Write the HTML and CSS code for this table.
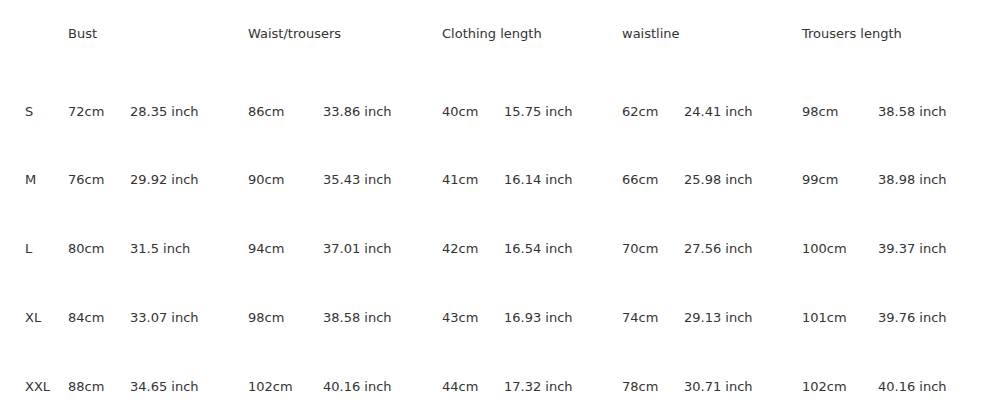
FILE: index.html
```html
<!DOCTYPE html>
<html>
<head>
<meta charset="utf-8">
<link rel="stylesheet" href="styles.css">
</head>
<body>
<div class="table">
  <div class="row head">
    <div class="cell"></div>
    <div class="cell span2">Bust</div>
    <div class="cell span2">Waist/trousers</div>
    <div class="cell span2">Clothing length</div>
    <div class="cell span2">waistline</div>
    <div class="cell span2">Trousers length</div>
  </div>
  <div class="body">
    <div class="row">
      <div class="cell">S</div>
      <div class="cell">72cm</div><div class="cell">28.35 inch</div>
      <div class="cell">86cm</div><div class="cell">33.86 inch</div>
      <div class="cell">40cm</div><div class="cell">15.75 inch</div>
      <div class="cell">62cm</div><div class="cell">24.41 inch</div>
      <div class="cell">98cm</div><div class="cell">38.58 inch</div>
    </div>
    <div class="row">
      <div class="cell">M</div>
      <div class="cell">76cm</div><div class="cell">29.92 inch</div>
      <div class="cell">90cm</div><div class="cell">35.43 inch</div>
      <div class="cell">41cm</div><div class="cell">16.14 inch</div>
      <div class="cell">66cm</div><div class="cell">25.98 inch</div>
      <div class="cell">99cm</div><div class="cell">38.98 inch</div>
    </div>
    <div class="row">
      <div class="cell">L</div>
      <div class="cell">80cm</div><div class="cell">31.5 inch</div>
      <div class="cell">94cm</div><div class="cell">37.01 inch</div>
      <div class="cell">42cm</div><div class="cell">16.54 inch</div>
      <div class="cell">70cm</div><div class="cell">27.56 inch</div>
      <div class="cell">100cm</div><div class="cell">39.37 inch</div>
    </div>
    <div class="row">
      <div class="cell">XL</div>
      <div class="cell">84cm</div><div class="cell">33.07 inch</div>
      <div class="cell">98cm</div><div class="cell">38.58 inch</div>
      <div class="cell">43cm</div><div class="cell">16.93 inch</div>
      <div class="cell">74cm</div><div class="cell">29.13 inch</div>
      <div class="cell">101cm</div><div class="cell">39.76 inch</div>
    </div>
    <div class="row">
      <div class="cell">XXL</div>
      <div class="cell">88cm</div><div class="cell">34.65 inch</div>
      <div class="cell">102cm</div><div class="cell">40.16 inch</div>
      <div class="cell">44cm</div><div class="cell">17.32 inch</div>
      <div class="cell">78cm</div><div class="cell">30.71 inch</div>
      <div class="cell">102cm</div><div class="cell">40.16 inch</div>
    </div>
  </div>
</div>
</body>
</html>
```
FILE: styles.css
```css
html, body {
  margin: 0;
  padding: 0;
  background: #ffffff;
}
body {
  font-family: "DejaVu Sans", Verdana, sans-serif;
  font-size: 13px;
  line-height: 20px;
  color: #333333;
}
.table {
  display: flex;
  flex-direction: column;
  padding: 23.5px 0 0 25px;
}
.row {
  display: grid;
  grid-template-columns: 43px 62px 118px 75px 119px 62px 118px 62px 118px 76px 1fr;
  height: 20px;
}
.head {
  margin-bottom: 58px;
}
.body {
  display: flex;
  flex-direction: column;
  gap: 48.75px;
}
.cell {
  white-space: nowrap;
}
.span2 {
  grid-column: span 2;
}
```
